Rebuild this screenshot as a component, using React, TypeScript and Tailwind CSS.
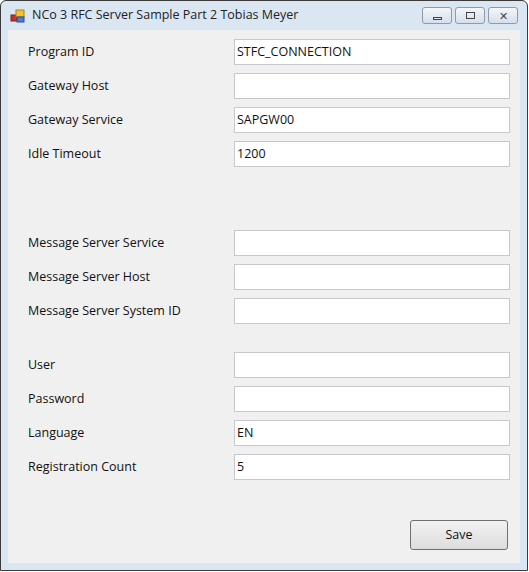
export default function App() {
  const Row = ({ label, value = "", mt = "" }: { label: string; value?: string; mt?: string }) => (
    <div className={`flex h-[26px] items-center ${mt}`}>
      <span className="w-[226px] shrink-0 pl-[20px]">{label}</span>
      <div className="flex h-[26px] w-[276px] items-center border border-[#c5c8cf] bg-white px-[2px]">{value}</div>
    </div>
  );
  return (
    <div className="h-[572px] w-[529px] bg-white" style={{ fontFamily: '"Open Sans", "Noto Sans", sans-serif' }}>
      <div className="flex h-[571px] w-[528px] flex-col rounded-t-[6px] border border-[#3b3b3b] bg-[#dbe6f3] text-[12.5px] text-[#111]">
        <div className="flex h-[29px] items-center px-[9px]">
          <svg width="16" height="16" viewBox="0 0 16 16" className="mr-[6px]">
            <rect x="1" y="7" width="6" height="6" fill="#c0342b" stroke="#7a1d18" />
            <rect x="6" y="2" width="8" height="7" fill="#f2c233" stroke="#a6841d" />
            <rect x="7" y="9" width="7" height="5" fill="#4c7fd1" stroke="#2a4f8f" />
          </svg>
          <span className="text-[12.5px] text-[#222]">NCo 3 RFC Server Sample Part 2 Tobias Meyer</span>
          <div className="ml-auto flex gap-[3px]">
            {["min", "max", "close"].map((k) => (
              <div key={k} className="flex h-[17px] w-[30px] items-center justify-center rounded-[3px] border border-[#8e9aab] bg-gradient-to-b from-[#f3f6fb] to-[#d6dfeb]">
                {k === "min" && <div className="mt-[5px] h-[3px] w-[9px] border border-[#444]" />}
                {k === "max" && <div className="h-[7px] w-[9px] border border-[#444]" />}
                {k === "close" && <span className="text-[11px] leading-none text-[#444]">✕</span>}
              </div>
            ))}
          </div>
        </div>
        <div className="mx-[7px] flex flex-1 flex-col bg-[#f0f0f0] pt-[9px]">
          <div className="flex flex-col gap-[8px]">
            <Row label="Program ID" value="STFC_CONNECTION" />
            <Row label="Gateway Host" />
            <Row label="Gateway Service" value="SAPGW00" />
            <Row label="Idle Timeout" value="1200" />
            <Row label="Message Server Service" mt="mt-[55px]" />
            <Row label="Message Server Host" />
            <Row label="Message Server System ID" />
            <Row label="User" mt="mt-[20px]" />
            <Row label="Password" />
            <Row label="Language" value="EN" />
            <Row label="Registration Count" value="5" />
          </div>
          <div className="mt-[40px] flex justify-end pr-[12px]">
            <button className="h-[30px] w-[98px] rounded-[3px] border border-[#707070] bg-gradient-to-b from-[#f2f2f2] to-[#dddddd] text-[12.5px]">Save</button>
          </div>
        </div>
        <div className="h-[7px]" />
      </div>
    </div>
  );
}
